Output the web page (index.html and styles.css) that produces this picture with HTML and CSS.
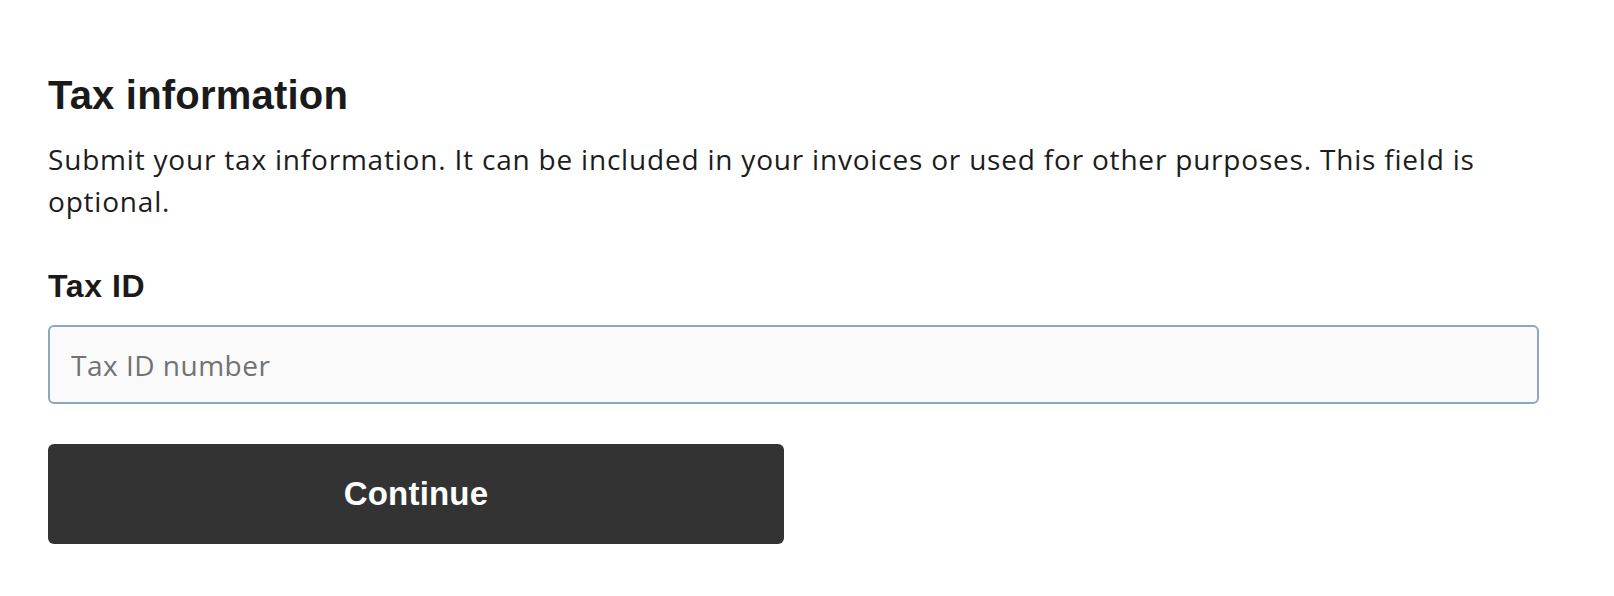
FILE: index.html
```html
<!DOCTYPE html>
<html lang="en">
<head>
<meta charset="utf-8">
<title>Tax information</title>
<link rel="stylesheet" href="styles.css">
</head>
<body>
<main class="page">
  <form class="tax-form" onsubmit="return false;">
    <h1 class="title">Tax information</h1>
    <p class="desc">Submit your tax information. It can be included in your invoices or used for other purposes. This field is optional.</p>
    <label class="label" for="taxid">Tax ID</label>
    <input class="field" id="taxid" type="text" placeholder="Tax ID number">
    <button class="btn" type="submit">Continue</button>
  </form>
</main>
</body>
</html>
```

FILE: styles.css
```css
html, body {
  margin: 0;
  padding: 0;
  background: #ffffff;
}
body {
  font-family: "Liberation Sans", Arial, sans-serif;
  color: #1a1a1a;
}
.page {
  padding: 71px 0 0 48px;
}
.tax-form {
  display: flex;
  flex-direction: column;
  align-items: flex-start;
  width: 1491px;
}
.title {
  margin: 0;
  font-size: 40px;
  line-height: 48px;
  font-weight: 700;
  letter-spacing: 0.2px;
  color: #1a1a1a;
}
.desc {
  margin: 19px 0 0 0;
  font-family: "Open Sans", "Liberation Sans", Arial, sans-serif;
  font-size: 28px;
  line-height: 42px;
  font-weight: 400;
  letter-spacing: 0.8px;
  color: #1c1c1c;
}
.label {
  margin-top: 45px;
  font-size: 32px;
  line-height: 38px;
  font-weight: 700;
  letter-spacing: 0.6px;
  color: #1a1a1a;
}
.field {
  box-sizing: border-box;
  margin-top: 20px;
  width: 1491px;
  height: 79px;
  padding: 0 21px;
  border: 2px solid #8ba8c2;
  border-radius: 6px;
  background: #fafafa;
  font-family: "Open Sans", "Liberation Sans", Arial, sans-serif;
  font-size: 28px;
  letter-spacing: 0.5px;
  color: #1a1a1a;
  outline: none;
}
.field::placeholder {
  color: #727272;
  opacity: 1;
}
.btn {
  margin-top: 40px;
  width: 736px;
  height: 100px;
  border: none;
  border-radius: 6px;
  background: #333333;
  color: #ffffff;
  font-family: inherit;
  font-size: 33px;
  font-weight: 700;
  letter-spacing: 0.2px;
  cursor: pointer;
}
```
